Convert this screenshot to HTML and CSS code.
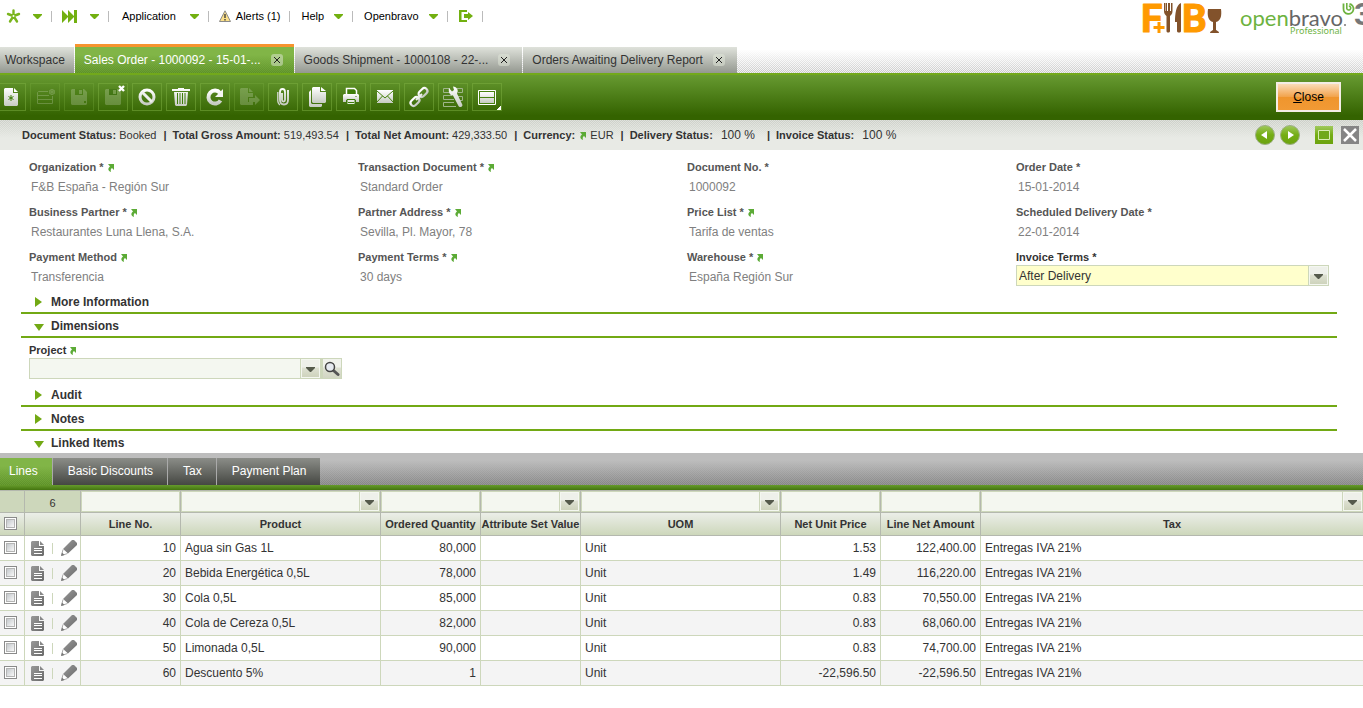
FILE: index.html
```
<!DOCTYPE html>
<html lang="en">
<head>
    <meta charset="UTF-8">
    <meta name="viewport" content="width=device-width, initial-scale=1.0">
    <title>Sales Order - 1000092</title>
    <link rel="stylesheet" href="styles.css">
</head>
<body>

    <!-- Shared icons -->
    <svg class="sprite" width="0" height="0" aria-hidden="true">
        <defs>
            <linearGradient id="metal" x1="0" y1="0" x2="0" y2="1">
                <stop offset="0" stop-color="#ffffff"/>
                <stop offset="1" stop-color="#c6cbc2"/>
            </linearGradient>
            <linearGradient id="ball" x1="0" y1="0" x2="0" y2="1">
                <stop offset="0" stop-color="#a0c95c"/>
                <stop offset="0.5" stop-color="#74ad14"/>
                <stop offset="1" stop-color="#6ca30f"/>
            </linearGradient>
            <linearGradient id="grey" x1="0" y1="0" x2="1" y2="1">
                <stop offset="0" stop-color="#999999"/>
                <stop offset="1" stop-color="#6a6a6a"/>
            </linearGradient>
        </defs>
        <symbol id="down" viewBox="0 0 9 5"><path d="M0 0h9v1L5 5H4L0 1z" fill="#72b010"/></symbol>
        <symbol id="go" viewBox="0 0 7 8"><path d="M1 0h6v6L5 4C3.500 5 3.500 6 4 8 1 7 .5 4.500 3 2.500z" fill="#5cab36"/></symbol>
        <symbol id="doc" viewBox="0 0 13 15">
            <path d="M1 0h7v5h5v9l-1 1H1l-1-1V1z" fill="url(#grey)"/>
            <path d="M9 0l4 4H9z" fill="#888"/>
            <path d="M3 7.500h8M3 9.500h8M3 12.500h8" stroke="#fff"/>
        </symbol>
        <symbol id="pencil" viewBox="0 0 16 16">
            <path d="M11 0h2l3 3v2L7 13.500 2 9z" fill="url(#grey)"/>
            <path d="M2 9.500L.5 15.500 6.500 13.500" fill="#fff" stroke="#aaa"/>
            <path d="M0 16l1-3.500L3.500 15z" fill="#777"/>
        </symbol>
    </svg>

    <header class="top">
        <nav class="menu">
            <button class="menu-item quick" aria-label="Quick create">
                <svg width="15" height="15" viewBox="0 0 15 15"><path d="M7.500 7V1.500M7.500 7L2 5M7.500 7L13 5M7.500 7L4 12.500M7.500 7L11 12.500" stroke="#7ab51d" stroke-width="2.400" stroke-linecap="round"/><circle cx="7.500" cy="7" r="1" fill="#fff"/></svg>
                <svg width="9" height="5"><use href="#down"/></svg>
            </button>
            <button class="menu-item quick" aria-label="Quick launch">
                <svg width="16" height="13" viewBox="0 0 16 13"><path d="M0 0l6 6V0l6 6V0h3v13h-3V7l-6 6V7l-6 6z" fill="#72b010"/></svg>
                <svg width="9" height="5"><use href="#down"/></svg>
            </button>
            <button class="menu-item app">Application <svg width="9" height="5"><use href="#down"/></svg></button>
            <button class="menu-item alerts">
                <svg width="12" height="12" viewBox="0 0 12 12"><path d="M6 .8L11.500 11.500H.5z" fill="#fbe08a" stroke="#8a8a8a"/><path d="M6 4v4M6 9v1.500" stroke="#333" stroke-width="1.300"/></svg>
                Alerts (1)
            </button>
            <button class="menu-item wide">Help <svg width="9" height="5"><use href="#down"/></svg></button>
            <button class="menu-item wide">Openbravo <svg width="9" height="5"><use href="#down"/></svg></button>
            <button class="menu-item wide" aria-label="Log out">
                <svg width="14" height="12" viewBox="0 0 14 12"><path d="M8 0v2H2.500v8H8v2H0V0z" fill="#72b010"/><path d="M5 4h4V2l5 4-5 4V8H5z" fill="#72b010"/></svg>
            </button>
        </nav>
        <div class="logos">
            <svg width="80" height="32" viewBox="0 0 80 32" role="img" aria-label="F and B">
                <text class="logo-letter" x="-1" y="30">F</text>
                <path d="M17 20v11M11 25.500h12" stroke="#fff" stroke-width="5"/>
                <path d="M17 20v11M11.500 25.500h11" stroke="#ff9a00" stroke-width="3"/>
                <path d="M22 1v8c0 3 1.500 4 2.500 5v15c0 2 3.500 2 3.500 0V14c1-1 2.500-2 2.500-5V1h-1.500v8h-1V1h-2v8h-1V1h-1.500v8h-.5V1z" fill="#82522b"/>
                <path d="M39 1v28c0 2-4 2-4 0V20h-2C33 12 34 3 39 1z" fill="#82522b"/>
                <text class="logo-letter" x="40" y="30">B</text>
                <path d="M66 7h13c1 7-.5 12-5 13v8c1 1 3 1 3 3h-9c0-2 2-2 3-3v-8c-4.500-1-6-6-5-13z" fill="#82522b"/>
            </svg>
            <svg width="123" height="36" viewBox="0 0 123 36" role="img" aria-label="openbravo 3">
                <text class="logo-name" x="0" y="24"><tspan class="open">open</tspan>bravo</text>
                <circle cx="105" cy="23" r="1" fill="#777"/>
                <text class="logo-edition" x="50" y="32">Professional</text>
                <path d="M103.500 1.500v5a5 5 0 1 0 6-4.500" fill="none" stroke="#6db33f" stroke-width="1.800"/>
                <path d="M106.800 1v4.500a2 2 0 1 0 2-1.500" fill="none" stroke="#6db33f" stroke-width="1.600"/>
                <text class="logo-three" x="114" y="23">3</text>
            </svg>
        </div>
    </header>

    <!-- Window tabs -->
    <nav class="tabs">
        <div class="tab home"><a href="#workspace">Workspace</a></div>
        <div class="tab active"><a href="#order">Sales Order - 1000092 - 15-01-...</a><button class="tab-close" aria-label="Close tab"></button></div>
        <div class="tab"><a href="#shipment">Goods Shipment - 1000108 - 22-...</a><button class="tab-close" aria-label="Close tab"></button></div>
        <div class="tab"><a href="#report">Orders Awaiting Delivery Report</a><button class="tab-close" aria-label="Close tab"></button></div>
    </nav>

    <div class="toolbar">
        <div class="tools">
            <button class="tool" aria-label="New in form"><svg width="24" height="24" viewBox="0 0 24 24"><path d="M6 3h8v5h5v12l-1 1H6l-1-1V4z" fill="url(#metal)"/><path d="M15 3l4 4h-4z" fill="#fff"/><path d="M12 10v6M9.500 11.500l5 3M14.500 11.500l-5 3" stroke="#3f7d0a"/></svg></button>
            <button class="tool off" aria-label="New in grid"><svg width="24" height="24" viewBox="0 0 24 24"><path d="M15 6.500H5.500l-1 1v11h15V11M4.500 10.500H16M4.500 14.500h15" fill="none" stroke="#fff"/><path d="M19 4v6M16.500 5.500l5 3M21.500 5.500l-5 3" stroke="#fff"/><circle cx="19" cy="7" r="2.500" fill="none" stroke="#fff"/></svg></button>
            <button class="tool off" aria-label="Save" disabled><svg width="24" height="24" viewBox="0 0 24 24"><path d="M5 4h12l3 3v12l-1 1H5l-1-1V5z" fill="#fff"/><path d="M8 4h8v6H8zM17 16h2v2h-2z" fill="#427c10"/><path d="M12 5h3v4h-3z" fill="#fff"/></svg></button>
            <button class="tool" aria-label="Save and close"><svg width="24" height="24" viewBox="0 0 24 24"><g opacity="0.2"><path d="M5 4h12l3 3v12l-1 1H5l-1-1V5z" fill="#fff"/><path d="M8 4h8v6H8z" fill="#124c00"/><path d="M12 5h3v4h-3z" fill="#fff"/></g><path d="M18 1l5 5M23 1l-5 5" stroke="#fff" stroke-width="2.400"/></svg></button>
            <button class="tool" aria-label="Undo"><svg width="24" height="24" viewBox="0 0 24 24"><circle cx="12" cy="12" r="7" fill="none" stroke="url(#metal)" stroke-width="3"/><path d="M7 7l10 10" stroke="#eef0ec" stroke-width="3"/></svg></button>
            <button class="tool" aria-label="Delete"><svg width="24" height="24" viewBox="0 0 24 24"><path d="M3 4h6V3h6v1h6v2H3zM5 7h14l-1 13-1 1H7l-1-1z" fill="url(#metal)"/><path d="M8.500 8v11M11 8v11M13.500 8v11M16 8v11" stroke="#3f7d0a"/></svg></button>
            <button class="tool" aria-label="Refresh"><svg width="24" height="24" viewBox="0 0 24 24"><path d="M17.500 15.500A6.500 6.500 0 1 1 17 8" fill="none" stroke="url(#metal)" stroke-width="4"/><path d="M20 4v8h-8z" fill="#f4f5f2"/></svg></button>
            <button class="tool off" aria-label="Export" disabled><svg width="24" height="24" viewBox="0 0 24 24"><path d="M4 3h7v5h5v4h-5v5h5v3H4l-1-1V4zM12 3l4 4h-4z" fill="#fff"/><path d="M12 13h6v-3l5 5-5 5v-3h-6z" fill="#fff"/></svg></button>
            <button class="tool" aria-label="Attachments"><svg width="24" height="24" viewBox="0 0 24 24"><path d="M11 8v7c0 2 3 2 3 0V7c0-4-5-4-5 0v8c0 6 8 6 8 0V5" fill="none" stroke="url(#metal)" stroke-width="1.800"/><path d="M6.800 7v9c0 2 1 3 2 4" fill="none" stroke="#d0d4cd" stroke-width="1.400"/></svg></button>
            <button class="tool" aria-label="Copy"><svg width="24" height="24" viewBox="0 0 24 24"><path d="M4 7l2-2v13l1 1h10v2l-1 1H5l-1-1z" fill="url(#metal)"/><path d="M8 2h7v5h6v10l-1 1H8l-1-1V3z" fill="url(#metal)"/><path d="M16 2l5 4h-5z" fill="#fff"/></svg></button>
            <button class="tool" aria-label="Print"><svg width="24" height="24" viewBox="0 0 24 24"><path d="M7.500 9V3.500h8l2 2V9" fill="#3f7d0a" stroke="#fff" stroke-width="1.500"/><path d="M5 9h14l1 1v7h-3v-2H7v2H4v-7z" fill="url(#metal)"/><path d="M8 14.500h8v5H8z" fill="#e8ebe5" stroke="#3f7d0a"/><path d="M9 17.500h6M16.500 11.500h1" stroke="#3f7d0a"/></svg></button>
            <button class="tool" aria-label="Email"><svg width="24" height="24" viewBox="0 0 24 24"><path d="M4 5h16v13H4z" fill="url(#metal)"/><path d="M4 6l8 7 8-7M4 17l5.500-6M20 17l-5.500-6" fill="none" stroke="#47820f"/></svg></button>
            <button class="tool" aria-label="Link"><svg width="24" height="24" viewBox="0 0 24 24"><g fill="none" stroke="url(#metal)" stroke-width="2.200"><rect x="11" y="4.500" width="10" height="6" rx="3" transform="rotate(-45 16 7.500)"/><rect x="3" y="13.500" width="10" height="6" rx="3" transform="rotate(-45 8 16.500)"/></g><path d="M9 15l6-6" stroke="#eef0ec" stroke-width="2"/></svg></button>
            <button class="tool" aria-label="Settings"><svg width="24" height="24" viewBox="0 0 24 24"><path d="M9 3.500H2.500v4H9M16 3.500h5.500v4H17M11 10.500H2.500v4H13M16 11.500h5.500v4H18M13 17.500H2.500v4H15" fill="none" stroke="#9fb58b"/><path d="M8 3l3 3.500L13 5l-1-3.500c4 0 6 4 4 7L21.500 20c0 2-3 3-4 1L12 10.500C9 10.500 7 7 8 3z" fill="url(#metal)"/></svg></button>
            <button class="tool more" aria-label="View"><svg width="24" height="24" viewBox="0 0 24 24"><path d="M3.500 5.500h17v14h-17z" fill="#47820f" stroke="#fff"/><path d="M5 7h14v5H5zM5 13h14v5H5z" fill="url(#metal)"/></svg></button>
        </div>
        <button class="close-order"><u>C</u>lose</button>
    </div>

    <!-- Status bar -->
    <div class="status">
        <p class="status-text"><b>Document Status:</b> Booked<b class="bar">|</b><b>Total Gross Amount:</b> 519,493.54<b class="bar">|</b><b>Total Net Amount:</b> 429,333.50<b class="bar">|</b><b>Currency:</b> <svg width="7" height="8"><use href="#go"/></svg> EUR<b class="bar">|</b><b>Delivery Status:</b> <span class="percent">100 %</span><b class="bar">|</b><b>Invoice Status:</b> <span class="percent">100 %</span></p>
        <div class="record-nav">
            <button aria-label="Previous record"><svg width="20" height="20" viewBox="0 0 20 20"><circle cx="10" cy="10" r="9.500" fill="url(#ball)" stroke="#9caf84"/><path d="M12 6v8l-6-4z" fill="#fff"/></svg></button>
            <button aria-label="Next record"><svg width="20" height="20" viewBox="0 0 20 20"><circle cx="10" cy="10" r="9.500" fill="url(#ball)" stroke="#9caf84"/><path d="M8 6v8l6-4z" fill="#fff"/></svg></button>
            <button class="maximize" aria-label="Maximize"><svg width="18" height="18" viewBox="0 0 18 18"><path d="M0 0h18v18H0z" fill="url(#ball)"/><path d="M3.500 4.500h11v9h-11z" fill="#6fa81a" stroke="#d8ecb4"/></svg></button>
            <button aria-label="Close record"><svg width="18" height="18" viewBox="0 0 18 18"><path d="M0 0h18v18H0z" fill="#858585"/><path d="M3 3l12 12M15 3L3 15" stroke="#fff" stroke-width="2.500"/></svg></button>
        </div>
    </div>

    <!-- Order form -->
    <main class="form">
        <div class="fields">
            <div class="field"><span class="name">Organization * <svg width="7" height="8"><use href="#go"/></svg></span><span class="value">F&amp;B España - Región Sur</span></div>
            <div class="field"><span class="name">Transaction Document * <svg width="7" height="8"><use href="#go"/></svg></span><span class="value">Standard Order</span></div>
            <div class="field"><span class="name">Document No. *</span><span class="value">1000092</span></div>
            <div class="field"><span class="name">Order Date *</span><span class="value">15-01-2014</span></div>
            <div class="field"><span class="name">Business Partner * <svg width="7" height="8"><use href="#go"/></svg></span><span class="value">Restaurantes Luna Llena, S.A.</span></div>
            <div class="field"><span class="name">Partner Address * <svg width="7" height="8"><use href="#go"/></svg></span><span class="value">Sevilla, Pl. Mayor, 78</span></div>
            <div class="field"><span class="name">Price List * <svg width="7" height="8"><use href="#go"/></svg></span><span class="value">Tarifa de ventas</span></div>
            <div class="field"><span class="name">Scheduled Delivery Date *</span><span class="value">22-01-2014</span></div>
            <div class="field"><span class="name">Payment Method <svg width="7" height="8"><use href="#go"/></svg></span><span class="value">Transferencia</span></div>
            <div class="field"><span class="name">Payment Terms * <svg width="7" height="8"><use href="#go"/></svg></span><span class="value">30 days</span></div>
            <div class="field"><span class="name">Warehouse * <svg width="7" height="8"><use href="#go"/></svg></span><span class="value">España Región Sur</span></div>
            <div class="field">
                <label class="name editable" for="invoiceTerms">Invoice Terms *</label>
                <select class="combo required" id="invoiceTerms"><option>After Delivery</option></select>
            </div>
        </div>

        <button class="section">More Information</button>
        <button class="section open">Dimensions</button>
        <div class="fields dimensions">
            <div class="field">
                <label class="name editable" for="project">Project <svg width="7" height="8"><use href="#go"/></svg></label>
                <div class="lookup">
                    <select class="combo" id="project"><option></option></select>
                    <button class="search" aria-label="Search project"><svg width="16" height="16" viewBox="0 0 16 16"><path d="M9.500 9.500l4.500 4" stroke="#555" stroke-width="3" stroke-linecap="round"/><circle cx="6" cy="6" r="4.500" fill="#e6eaf0" stroke="#444" stroke-width="1.500"/></svg></button>
                </div>
            </div>
        </div>
        <button class="section">Audit</button>
        <button class="section">Notes</button>
        <button class="section open last">Linked Items</button>
    </main>

    <!-- Child tabs -->
    <nav class="child-tabs">
        <a class="child-tab current" href="#lines">Lines</a>
        <a class="child-tab" href="#discounts">Basic Discounts</a>
        <a class="child-tab" href="#tax">Tax</a>
        <a class="child-tab" href="#plan">Payment Plan</a>
    </nav>

    <table class="grid">
        <colgroup>
            <col class="w-check"><col class="w-actions"><col class="w-100"><col class="w-200"><col class="w-100"><col class="w-100"><col class="w-200"><col class="w-100"><col class="w-100"><col>
        </colgroup>
        <thead>
            <tr class="filters">
                <td></td>
                <td class="count">6</td>
                <td><input class="filter" type="text" aria-label="Filter line no."></td>
                <td><select class="combo filter" aria-label="Filter product"><option></option></select></td>
                <td><input class="filter" type="text" aria-label="Filter quantity"></td>
                <td><select class="combo filter" aria-label="Filter attribute set"><option></option></select></td>
                <td><select class="combo filter" aria-label="Filter UOM"><option></option></select></td>
                <td><input class="filter" type="text" aria-label="Filter unit price"></td>
                <td><input class="filter" type="text" aria-label="Filter net amount"></td>
                <td><select class="combo filter" aria-label="Filter tax"><option></option></select></td>
            </tr>
            <tr class="titles">
                <th><input type="checkbox" aria-label="Select all"></th>
                <th></th>
                <th>Line No.</th>
                <th>Product</th>
                <th>Ordered Quantity</th>
                <th>Attribute Set Value</th>
                <th>UOM</th>
                <th>Net Unit Price</th>
                <th>Line Net Amount</th>
                <th>Tax</th>
            </tr>
        </thead>
        <tbody id="lines"></tbody>
    </table>

    <script src="lines.js"></script>
</body>
</html>
```

FILE: styles.css
```
* {
    box-sizing: border-box;
}

body {
    margin: 0;
    font-family: "Liberation Sans", Arial, sans-serif;
    font-size: 12px;
    color: #333;
    background: #fff;
    overflow-x: hidden;
}

button {
    font: inherit;
    color: inherit;
    background: none;
    border: 0;
    padding: 0;
    cursor: pointer;
}

a {
    color: inherit;
    text-decoration: none;
}

svg {
    display: block;
    flex: none;
}

.sprite {
    position: absolute;
}

/* Header */
.top {
    display: flex;
    justify-content: space-between;
    height: 44px;
}

.menu {
    display: flex;
    height: 32px;
    font-size: 11px;
    color: #000;
}

.menu-item {
    display: flex;
    align-items: center;
    gap: 10px;
    padding: 0 10px;
    background: linear-gradient(#bbb, #bbb) right center / 1px 11px no-repeat;
}

.menu-item.wide {
    padding-left: 11px;
}

.quick {
    gap: 12px;
}

.quick:first-child {
    padding-left: 6px;
}

.app {
    gap: 14px;
    padding-left: 13px;
}

.alerts {
    gap: 5px;
}

.logos {
    display: flex;
    gap: 18px;
    padding-top: 2px;
}

.logos svg {
    overflow: visible;
}

.logo-letter {
    font-family: Roboto, sans-serif;
    font-size: 39px;
    font-weight: bold;
    fill: #ff9a00;
    stroke: #ff9a00;
    stroke-width: 1px;
    stroke-linejoin: round;
}

.logo-name {
    font-family: Lato, sans-serif;
    font-size: 22px;
    fill: #666;
}

.logo-name .open {
    fill: #6db33f;
}

.logo-edition {
    font-family: "Noto Sans", sans-serif;
    font-size: 9px;
    fill: #6db33f;
}

.logo-three {
    font-family: Roboto, sans-serif;
    font-size: 32px;
    font-weight: bold;
    fill: #777;
}

/* Window tabs */
.tabs {
    display: flex;
    align-items: flex-end;
    gap: 1px;
    height: 29px;
    background:
        linear-gradient(#fff 20%, rgba(255, 255, 255, 0.2)),
        repeating-conic-gradient(#bbb 0 25%, #eee 0 50%) 0 0 / 2px 2px;
}

.tab {
    display: flex;
    align-items: center;
    gap: 10px;
    height: 26px;
    padding: 0 12px 0 9px;
    background: linear-gradient(#dfe2db, #949890);
}

.tab.home {
    padding: 0 9px 0 5px;
}

.tab.active {
    height: 29px;
    padding-right: 11px;
    color: #fff;
    border-top: 3px solid #f7942f;
    background:
        linear-gradient(#81b547 30%, rgba(108, 160, 50, 0.5)),
        repeating-conic-gradient(#4d8020 0 25%, #679b31 0 50%) 0 0 / 2px 2px;
}

.tab-close {
    width: 12px;
    height: 12px;
    border-radius: 3px;
    background:
        linear-gradient(45deg, transparent 42%, #222 42% 58%, transparent 58%) center / 6px 6px no-repeat,
        linear-gradient(-45deg, transparent 42%, #222 42% 58%, transparent 58%) center / 6px 6px no-repeat,
        rgba(225, 232, 218, 0.5);
}

/* Toolbar */
.toolbar {
    display: flex;
    align-items: center;
    justify-content: space-between;
    height: 47px;
    padding: 0 22px 1px 0;
    border-top: 2px solid #72a91b;
    background: linear-gradient(#679a31, #346300 90%);
}

.tools {
    display: flex;
    gap: 4px;
    margin-left: -4px;
}

.tool {
    display: flex;
    align-items: center;
    justify-content: center;
    width: 30px;
    height: 28px;
    border: 1px solid rgba(125, 175, 65, 0.5);
}

.tool.off {
    border-color: rgba(125, 175, 65, 0.3);
}

.tool.off svg {
    opacity: 0.2;
}

.tool.more {
    background: linear-gradient(135deg, transparent 50%, #fff 50%) right bottom / 4px 4px no-repeat;
}

.close-order {
    width: 65px;
    height: 30px;
    color: #000;
    border: 2px solid #f4ede4;
    background: linear-gradient(#fbdcb8, #f2a24a 50%, #ef952d 50%, #f19a35);
}

/* Status bar */
.status {
    display: flex;
    align-items: center;
    justify-content: space-between;
    height: 30px;
    padding: 0 4px 0 22px;
    background:
        linear-gradient(rgba(232, 234, 229, 0.2), #e8eae5 60%),
        repeating-conic-gradient(#c4c7c0 0 25%, #dcdfd9 0 50%) 0 0 / 2px 2px;
}

.status-text {
    margin: 0;
    font-size: 11px;
    white-space: nowrap;
}

.status-text svg,
.name svg {
    display: inline-block;
    vertical-align: -1px;
}

.status-text svg {
    margin: 0 1px;
}

.status-text .bar {
    margin: 0 6px 0 7px;
}

.percent {
    margin: 0 5px;
    font-size: 12px;
}

.record-nav {
    display: flex;
    align-items: center;
    gap: 5px;
}

.record-nav .maximize {
    margin: 0 3px 0 10px;
}

/* Form */
.form {
    padding: 9px 26px 0 21px;
}

.fields {
    display: grid;
    grid-template-columns: repeat(4, 1fr);
    row-gap: 4px;
}

.dimensions {
    padding: 4px 0;
}

.field {
    padding: 0 8px;
}

.name {
    display: block;
    height: 16px;
    font-size: 11px;
    font-weight: bold;
    line-height: 16px;
    color: #555;
}

.editable {
    color: #333;
}

.value {
    display: block;
    padding-left: 2px;
    line-height: 25px;
    color: #808080;
}

.combo {
    display: block;
    width: 100%;
    height: 21px;
    padding: 1px 22px 0 2px;
    font: inherit;
    color: #333;
    border: 1px solid #cdd7bb;
    border-radius: 0;
    appearance: none;
    background:
        url("data:image/svg+xml,%3Csvg xmlns='http://www.w3.org/2000/svg' width='9' height='5'%3E%3Cpath d='M0 0h9v1L5 5H4L0 1z' fill='%23555a4c'/%3E%3C/svg%3E") right 5px top 8px no-repeat,
        linear-gradient(#eef0ea 40%, #dde0d1 50%, #ced3bc) right 1px center / 17px 17px no-repeat,
        linear-gradient(to left, #f4f7f0 19px, #cdd7bb 19px) right / 20px 100% no-repeat,
        #f4f7f0;
}

.required {
    background-color: #ffffcc;
}

.lookup {
    display: flex;
}

.search {
    display: flex;
    align-items: center;
    justify-content: center;
    flex: none;
    width: 21px;
    height: 21px;
    border: 1px solid #cdd7bb;
    border-left-width: 2px;
    background: linear-gradient(#f0f2ec 40%, #dde0d1 50%, #d2d6c3);
}

.section {
    display: block;
    width: 100%;
    height: 24px;
    padding-left: 30px;
    font-weight: bold;
    line-height: 24px;
    text-align: left;
    border-bottom: 2px solid #72a914;
    background: url("data:image/svg+xml,%3Csvg xmlns='http://www.w3.org/2000/svg' width='10' height='12'%3E%3Cpath d='M1 1l7 5-7 5z' fill='%2372a914'/%3E%3C/svg%3E") 13px 6px no-repeat;
}

.section.open {
    background-image: url("data:image/svg+xml,%3Csvg xmlns='http://www.w3.org/2000/svg' width='10' height='12'%3E%3Cpath d='M0 4h10L5 11z' fill='%2372a914'/%3E%3C/svg%3E");
}

.section.last {
    height: 22px;
    border-bottom: 0;
}

/* Child tabs */
.child-tabs {
    display: flex;
    align-items: flex-end;
    height: 37px;
    padding-bottom: 5px;
    background:
        linear-gradient(#669b2c, #44750f) bottom / 100% 5px no-repeat,
        linear-gradient(#bdbdbd 20%, rgba(150, 150, 150, 0.4)),
        repeating-conic-gradient(#666 0 25%, #888 0 50%) 0 0 / 2px 2px;
}

.child-tab {
    padding: 0 14px 0 15px;
    line-height: 27px;
    color: #fff;
    border-right: 1px solid #aaa;
    background: linear-gradient(#8b8d88, #454742);
}

.child-tab.current {
    padding-left: 9px;
    background:
        linear-gradient(#81b547 30%, rgba(108, 160, 50, 0.5)),
        repeating-conic-gradient(#4d8020 0 25%, #679b31 0 50%) 0 0 / 2px 2px;
}

.child-tab:last-child {
    border-right: 0;
}

/* Lines grid */
.grid {
    width: 100%;
    table-layout: fixed;
    border-collapse: separate;
    border-spacing: 0;
    border-top: 1px solid #b4b8ae;
}

.w-check {
    width: 25px;
}

.w-actions {
    width: 56px;
}

.w-100 {
    width: 100px;
}

.w-200 {
    width: 200px;
}

.grid td,
.grid th {
    height: 25px;
    padding: 0 4px;
    white-space: nowrap;
    border-right: 1px solid #cdd7bb;
    border-bottom: 1px solid #cdd7bb;
}

.grid td:last-child,
.grid th:last-child {
    border-right: 0;
}

.grid .filters td {
    height: 22px;
    padding: 0;
    background: #cdd7bb;
    border-color: #b4b8ae;
}

.grid .filters .count {
    padding-top: 2px;
    font-size: 11px;
    text-align: center;
}

.filter {
    display: block;
    width: 100%;
    height: 21px;
    border: 1px solid #cdd7bb;
}

input.filter {
    background: #f4f7f0;
}

.grid .titles th {
    height: 23px;
    padding: 0;
    font-size: 11px;
    border-color: #b4b8ae;
    background: linear-gradient(#ebeee8, #cdd7bb);
}

.grid .titles th:first-child {
    padding: 0 4px 2px;
}

.grid tbody td:first-child {
    padding-bottom: 2px;
}

.grid input[type="checkbox"] {
    display: block;
    width: 13px;
    height: 13px;
    margin: 0;
    padding: 1px;
    appearance: none;
    border: 1px solid #8a8a8a;
    background:
        linear-gradient(135deg, #c4c8cc, #f8f8f8) center / 7px 7px no-repeat,
        linear-gradient(#b4b4b4, #b4b4b4) content-box no-repeat,
        #fff;
}

.grid tbody tr:nth-child(even) {
    background: #f4f4f4;
}

.grid .number {
    text-align: right;
}

.grid .row-actions {
    padding: 0 0 0 6px;
}

.actions {
    display: flex;
    align-items: center;
    gap: 8px;
}

.divider {
    flex: none;
    width: 1px;
    height: 11px;
    background: #cdd7bb;
}
```

FILE: lines.js
```
var lines = [
    ['10', 'Agua sin Gas 1L', '80,000', '1.53', '122,400.00'],
    ['20', 'Bebida Energética 0,5L', '78,000', '1.49', '116,220.00'],
    ['30', 'Cola 0,5L', '85,000', '0.83', '70,550.00'],
    ['40', 'Cola de Cereza 0,5L', '82,000', '0.83', '68,060.00'],
    ['50', 'Limonada 0,5L', '90,000', '0.83', '74,700.00'],
    ['60', 'Descuento 5%', '1', '-22,596.50', '-22,596.50']
];

var body = document.getElementById('lines');

lines.forEach(function (line) {
    var row = document.createElement('tr');
    row.innerHTML =
        '<td><input type="checkbox" aria-label="Select line ' + line[0] + '"></td>' +
        '<td class="row-actions"><div class="actions">' +
        '<button aria-label="Open line"><svg width="13" height="15"><use href="#doc"/></svg></button>' +
        '<span class="divider"></span>' +
        '<button aria-label="Edit line"><svg width="16" height="16"><use href="#pencil"/></svg></button>' +
        '</div></td>' +
        '<td class="number">' + line[0] + '</td>' +
        '<td>' + line[1] + '</td>' +
        '<td class="number">' + line[2] + '</td>' +
        '<td></td>' +
        '<td>Unit</td>' +
        '<td class="number">' + line[3] + '</td>' +
        '<td class="number">' + line[4] + '</td>' +
        '<td>Entregas IVA 21%</td>';
    body.appendChild(row);
});
```
